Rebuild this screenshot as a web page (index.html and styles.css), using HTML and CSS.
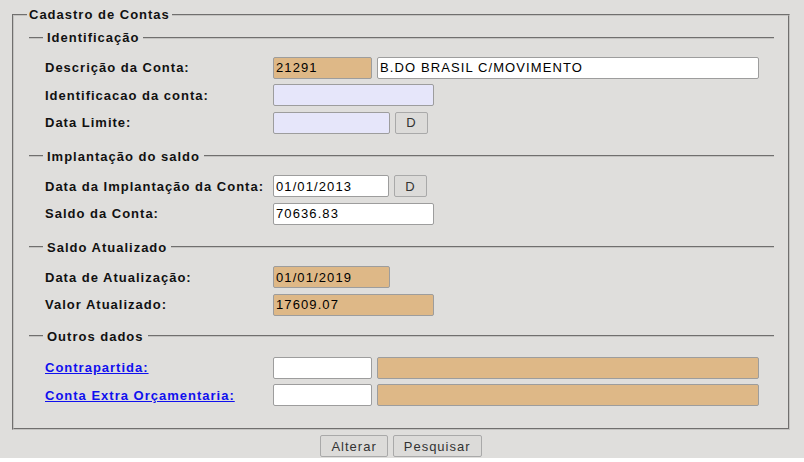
FILE: index.html
```html
<!DOCTYPE html>
<html lang="pt-BR">
<head>
<meta charset="utf-8">
<title>Cadastro de Contas</title>
<link rel="stylesheet" href="styles.css">
</head>
<body>
<div class="page">
  <fieldset class="outer">
    <legend class="outer-title">Cadastro de Contas</legend>

    <fieldset class="sec">
      <legend class="sec-title">Identificação</legend>
      <div class="rows">
        <div class="row">
          <label class="lbl">Descrição da Conta:</label>
          <input class="fld tan w99" type="text" value="21291" readonly>
          <input class="fld white w382" type="text" value="B.DO BRASIL C/MOVIMENTO">
        </div>
        <div class="row">
          <label class="lbl">Identificacao da conta:</label>
          <input class="fld lav w161" type="text" readonly>
        </div>
        <div class="row">
          <label class="lbl">Data Limite:</label>
          <input class="fld lav w117" type="text" readonly>
          <button class="btn btn-d" type="button">D</button>
        </div>
      </div>
    </fieldset>

    <fieldset class="sec">
      <legend class="sec-title">Implantação do saldo</legend>
      <div class="rows">
        <div class="row">
          <label class="lbl">Data da Implantação da Conta:</label>
          <input class="fld white w116" type="text" value="01/01/2013">
          <button class="btn btn-d" type="button">D</button>
        </div>
        <div class="row">
          <label class="lbl">Saldo da Conta:</label>
          <input class="fld white w161" type="text" value="70636.83">
        </div>
      </div>
    </fieldset>

    <fieldset class="sec sec-short">
      <legend class="sec-title">Saldo Atualizado</legend>
      <div class="rows">
        <div class="row">
          <label class="lbl">Data de Atualização:</label>
          <input class="fld tan w117" type="text" value="01/01/2019" readonly>
        </div>
        <div class="row">
          <label class="lbl">Valor Atualizado:</label>
          <input class="fld tan w161" type="text" value="17609.07" readonly>
        </div>
      </div>
    </fieldset>

    <fieldset class="sec sec-last">
      <legend class="sec-title">Outros dados</legend>
      <div class="rows">
        <div class="row">
          <a class="lbl link" href="#">Contrapartida:</a>
          <input class="fld white w99" type="text">
          <input class="fld tan w382" type="text" readonly>
        </div>
        <div class="row">
          <a class="lbl link" href="#">Conta Extra Orçamentaria:</a>
          <input class="fld white w99" type="text">
          <input class="fld tan w382" type="text" readonly>
        </div>
      </div>
    </fieldset>
  </fieldset>

  <div class="actions">
    <button class="btn btn-act" type="button">Alterar</button>
    <button class="btn btn-act" type="button">Pesquisar</button>
  </div>
</div>
</body>
</html>
```
FILE: styles.css
```css
html, body {
  margin: 0;
  padding: 0;
  background: #ffffff;
}

body {
  font-family: "Liberation Sans", Arial, sans-serif;
  font-size: 13px;
  color: #111;
}

.page {
  background: #dfdedc;
  height: 458px;
  box-sizing: border-box;
  padding: 7px 14px 0 12px;
}

.outer {
  margin: 0;
  padding: 8px 14px 22px 15px;
  border: 2px groove #c4c3c1;
  min-inline-size: 0;
}

.outer-title {
  margin-left: -2px;
  padding: 0 2px;
  font-weight: bold;
  line-height: 15px;
  letter-spacing: 1px;
  color: #111;
}

.sec {
  margin: 0 0 15px 0;
  padding: 11.5px 0 0 0;
  border: none;
  border-top: 2px groove #c4c3c1;
  min-inline-size: 0;
}

.sec-short {
  margin-bottom: 13px;
}

.sec-last {
  margin-bottom: 0;
  padding-top: 13px;
}

.sec-title {
  margin-left: 14px;
  padding: 0 4px;
  font-weight: bold;
  line-height: 15px;
  letter-spacing: 1px;
  color: #111;
}

.rows {
  display: flex;
  flex-direction: column;
  gap: 5.5px;
  padding-left: 16px;
}

.row {
  display: flex;
  align-items: center;
  gap: 5px;
  height: 22px;
}

.lbl {
  width: 223px;
  flex: none;
  font-weight: bold;
  letter-spacing: 1px;
  color: #111;
  white-space: nowrap;
}

.link {
  color: #1010ee;
  text-decoration: underline;
}

.fld {
  box-sizing: border-box;
  height: 22px;
  margin: 0;
  padding: 0 2px;
  border: 1px solid #9d9d9d;
  border-radius: 2px;
  font-family: "Liberation Sans", Arial, sans-serif;
  font-size: 13px;
  letter-spacing: 1.1px;
  color: #000;
  outline: none;
}

.tan { background: #deb887; }
.white { background: #ffffff; }
.lav { background: #e6e6fa; }

.w99 { width: 99px; }
.w116 { width: 116px; }
.w117 { width: 117px; }
.w161 { width: 161px; }
.w382 { width: 382px; }

.btn {
  box-sizing: border-box;
  height: 22px;
  margin: 0;
  border: 1px solid #a9a9a9;
  border-radius: 2px;
  background: #dcdbd9;
  font-family: "Liberation Sans", Arial, sans-serif;
  font-size: 13px;
  letter-spacing: 1px;
  color: #333;
}

.btn-d {
  width: 33px;
  padding: 0;
}

.actions {
  display: flex;
  justify-content: center;
  gap: 5px;
  margin-top: 5px;
}

.btn-act {
  padding: 0 10px;
}
```
